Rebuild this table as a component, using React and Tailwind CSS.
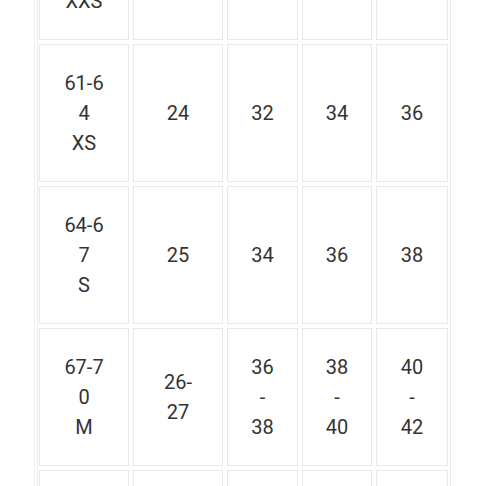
import React from "react";

const rows = [
  [["58-6", "1", "XXS"], ["23"], ["30"], ["32"], ["34"]],
  [["61-6", "4", "XS"], ["24"], ["32"], ["34"], ["36"]],
  [["64-6", "7", "S"], ["25"], ["34"], ["36"], ["38"]],
  [["67-7", "0", "M"], ["26-", "27"], ["36", "-", "38"], ["38", "-", "40"], ["40", "-", "42"]],
  [["70-7", "3", "L"], ["28-", "29"], ["38", "-", "40"], ["40", "-", "42"], ["42", "-", "44"]],
];

export default function App() {
  return (
    <div
      className="w-[486px] h-[486px] overflow-hidden bg-white text-[#333]"
      style={{ fontFamily: "Roboto, 'Noto Sans', sans-serif" }}
    >
      <div className="-mt-[98px] ml-[34px] border-l border-[#efefef] flex">
        <div className="ml-[2px] w-[414px] border-x border-[#ebebeb] pl-[1px]">
          <div className="grid grid-cols-[90px_90px_71px_70px_72px] auto-rows-[138px] gap-[4px]">
            {rows.map((row, ri) =>
              row.map((cell, ci) => (
                <div
                  key={ri + "-" + ci}
                  className="border-[1.5px] border-[#e8e8e8] flex flex-col items-center justify-center text-[20px] leading-[30px]"
                >
                  {cell.map((line, li) => (
                    <div key={li}>{line}</div>
                  ))}
                </div>
              ))
            )}
          </div>
        </div>
      </div>
    </div>
  );
}
